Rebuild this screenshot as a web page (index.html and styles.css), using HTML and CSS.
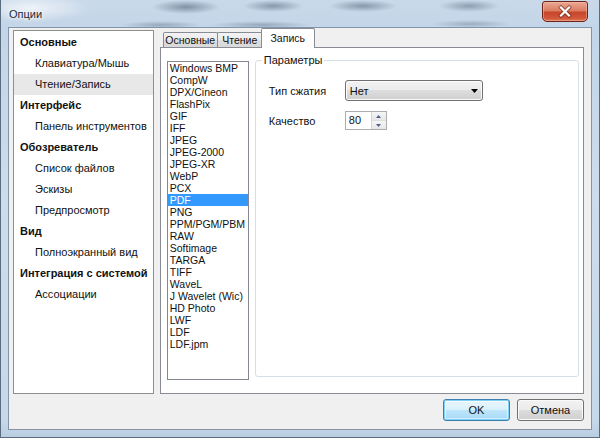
FILE: index.html
```html
<!DOCTYPE html>
<html>
<head>
<meta charset="utf-8">
<title>Опции</title>
<link rel="stylesheet" href="styles.css">
</head>
<body>
<div class="window">
  <div class="titlebar">
    <span class="title">Опции</span>
    <span class="close">
      <svg width="44" height="19" viewBox="0 0 44 19">
        <path d="M18 5.5 L26 13.5 M26 5.5 L18 13.5" stroke="#5a1a10" stroke-width="4" stroke-linecap="square" fill="none" opacity="0.55"/>
        <path d="M18 5.5 L26 13.5 M26 5.5 L18 13.5" stroke="#ffffff" stroke-width="2.2" stroke-linecap="square" fill="none"/>
      </svg>
    </span>
  </div>
  <div class="client">
    <div class="main">
      <div class="nav">
        <div class="nav-group">Основные</div>
        <div class="nav-item">Клавиатура/Мышь</div>
        <div class="nav-item selected">Чтение/Запись</div>
        <div class="nav-group">Интерфейс</div>
        <div class="nav-item">Панель инструментов</div>
        <div class="nav-group">Обозреватель</div>
        <div class="nav-item">Список файлов</div>
        <div class="nav-item">Эскизы</div>
        <div class="nav-item">Предпросмотр</div>
        <div class="nav-group">Вид</div>
        <div class="nav-item">Полноэкранный вид</div>
        <div class="nav-group">Интеграция с системой</div>
        <div class="nav-item">Ассоциации</div>
      </div>
      <div class="tabctl">
        <div class="tabstrip">
          <div class="tab tab-main">Основные</div>
          <div class="tab tab-read">Чтение</div>
          <div class="tab active">Запись</div>
        </div>
        <div class="panel">
          <div class="listbox">
            <div class="li">Windows BMP</div>
            <div class="li">CompW</div>
            <div class="li">DPX/Cineon</div>
            <div class="li">FlashPix</div>
            <div class="li">GIF</div>
            <div class="li">IFF</div>
            <div class="li">JPEG</div>
            <div class="li">JPEG-2000</div>
            <div class="li">JPEG-XR</div>
            <div class="li">WebP</div>
            <div class="li">PCX</div>
            <div class="li sel">PDF</div>
            <div class="li">PNG</div>
            <div class="li">PPM/PGM/PBM</div>
            <div class="li">RAW</div>
            <div class="li">Softimage</div>
            <div class="li">TARGA</div>
            <div class="li">TIFF</div>
            <div class="li">WaveL</div>
            <div class="li">J Wavelet (Wic)</div>
            <div class="li">HD Photo</div>
            <div class="li">LWF</div>
            <div class="li">LDF</div>
            <div class="li">LDF.jpm</div>
          </div>
          <fieldset class="group">
            <legend>Параметры</legend>
            <div class="form">
              <span class="lbl">Тип сжатия</span>
              <div class="combo">
                <span class="combo-text">Нет</span>
                <svg class="combo-arrow" width="7" height="4" viewBox="0 0 7 4"><path d="M0 0 H7 L3.5 4 Z" fill="#000"/></svg>
              </div>
              <span class="lbl">Качество</span>
              <div class="spin">
                <span class="spin-value">80</span>
                <span class="spin-btns">
                  <span class="spin-btn"><svg width="5" height="3" viewBox="0 0 5 3"><path d="M0 3 H5 L2.5 0 Z" fill="#4d6185"/></svg></span>
                  <span class="spin-btn"><svg width="5" height="3" viewBox="0 0 5 3"><path d="M0 0 H5 L2.5 3 Z" fill="#4d6185"/></svg></span>
                </span>
              </div>
            </div>
          </fieldset>
        </div>
      </div>
    </div>
    <div class="footer">
      <button class="btn default">OK</button>
      <button class="btn">Отмена</button>
    </div>
  </div>
</div>
</body>
</html>
```

FILE: styles.css
```css
* { box-sizing: border-box; }

html, body {
  margin: 0;
  padding: 0;
  width: 600px;
  height: 438px;
  overflow: hidden;
  background: #ffffff;
}

body {
  font-family: "Liberation Sans", Arial, sans-serif;
  font-size: 11px;
  color: #111;
}

.window {
  width: 600px;
  height: 438px;
  display: flex;
  flex-direction: column;
  padding: 0 7px 7px 7px;
  border: 1px solid #5a6c80;
  border-top: none;
  background:
    radial-gradient(ellipse 34px 7px at 185px 7px, rgba(70, 88, 110, 0.55), rgba(70, 88, 110, 0)),
    radial-gradient(ellipse 30px 6px at 272px 6px, rgba(70, 88, 110, 0.5), rgba(70, 88, 110, 0)),
    radial-gradient(ellipse 34px 6px at 362px 6px, rgba(70, 88, 110, 0.5), rgba(70, 88, 110, 0)),
    radial-gradient(ellipse 30px 6px at 468px 6px, rgba(70, 88, 110, 0.45), rgba(70, 88, 110, 0)),
    radial-gradient(ellipse 40px 4px at 160px 25px, rgba(80, 98, 120, 0.4), rgba(80, 98, 120, 0)),
    radial-gradient(ellipse 50px 4px at 260px 25px, rgba(80, 98, 120, 0.4), rgba(80, 98, 120, 0)),
    radial-gradient(ellipse 40px 4px at 470px 24px, rgba(80, 98, 120, 0.35), rgba(80, 98, 120, 0)),
    radial-gradient(ellipse 60px 14px at 30px 8px, rgba(255, 255, 255, 0.7), rgba(255, 255, 255, 0)),
    linear-gradient(180deg, #c9d9ea 0px, #c3d5e8 30px, #cddcec 200px, #c6d8ea 420px, #b9cde2 438px);
}

.titlebar {
  height: 28px;
  display: flex;
  align-items: flex-start;
  justify-content: space-between;
  margin: 0 -7px;
  padding: 0 11px 0 8px;
}

.title {
  font-family: "Liberation Sans", Arial, sans-serif;
  font-size: 11px;
  line-height: 13px;
  margin-top: 8px;
  color: #1c2a3a;
  text-shadow: 0 0 6px rgba(255, 255, 255, 0.9), 0 0 3px rgba(255, 255, 255, 0.9);
}

.close {
  width: 46px;
  height: 21px;
  margin-top: 1px;
  display: flex;
  align-items: center;
  justify-content: center;
  border: 1px solid #6b2418;
  border-radius: 3px 3px 5px 5px;
  background: linear-gradient(180deg, #e9a895 0%, #dc7d63 45%, #c7462a 55%, #d0563a 85%, #e07a58 100%);
  box-shadow: inset 0 0 0 1px rgba(255, 200, 180, 0.45);
}

.close svg { display: block; }

.client {
  flex: 1;
  display: flex;
  flex-direction: column;
  background: #f0f0f0;
  border: 1px solid #8493a6;
  padding: 2px 7px 8px 4px;
}

.main {
  height: 364px;
  display: flex;
  gap: 6px;
}

.nav {
  width: 142px;
  border: 1px solid #8e8f8f;
  background: #ffffff;
  padding-top: 1px;
}

.nav-group,
.nav-item {
  height: 21px;
  line-height: 21px;
  white-space: nowrap;
}

.nav-group {
  font-weight: bold;
  padding-left: 6px;
}

.nav-item {
  padding-left: 21px;
}

.nav-item.selected {
  background: #e8e8e8;
}

.tabctl {
  width: 428px;
  display: flex;
  flex-direction: column;
}

.tabstrip {
  height: 17px;
  display: flex;
  align-items: flex-end;
  padding-left: 3px;
  position: relative;
  z-index: 1;
}

.tab {
  height: 15px;
  line-height: 14px;
  padding: 0;
  text-align: center;
  font-size: 10.5px;
  border: 1px solid #898c95;
  border-bottom: none;
  border-radius: 2px 2px 0 0;
  background: linear-gradient(180deg, #f3f3f3 0%, #ebebeb 50%, #dedede 50%, #d9d9d9 100%);
  white-space: nowrap;
}

.tab-main { width: 55px; }

.tab-read { width: 46px; }

.tab + .tab {
  margin-left: -1px;
}

.tab.active {
  width: 54px;
  height: 20px;
  line-height: 18px;
  margin: 0 -2px -1px -2px;
  background: #ffffff;
  position: relative;
  z-index: 2;
}

.panel {
  flex: 1;
  display: flex;
  gap: 6px;
  border: 1px solid #898c95;
  background: #ffffff;
  padding: 13px 4px 13px 6px;
}

.listbox {
  width: 82px;
  border: 1px solid #828790;
  padding: 0;
  background: #fff;
  font-size: 10.5px;
}

.li {
  height: 12px;
  line-height: 12px;
  padding-left: 2px;
  white-space: nowrap;
}

.li.sel {
  background: #3399ff;
  color: #ffffff;
}

.group {
  flex: 1;
  min-width: 0;
  margin: -7px 0 3px 0;
  padding: 13px 10px 0 13px;
  border: 1px solid #d5dfe5;
  border-radius: 3px;
  box-shadow: inset 1px 1px 0 #ffffff;
}

.group legend {
  padding: 0 2px;
  margin-left: -7px;
  line-height: 13px;
}

.form {
  display: grid;
  grid-template-columns: 76px auto;
  grid-template-rows: 21px 19px;
  row-gap: 10px;
  align-items: center;
  justify-content: start;
}

.lbl {
  white-space: nowrap;
}

.combo {
  width: 138px;
  height: 21px;
  display: flex;
  align-items: center;
  justify-content: space-between;
  padding: 0 3px 0 4px;
  border: 1px solid #707070;
  border-radius: 3px;
  background: linear-gradient(180deg, #f2f2f2 0%, #ebebeb 50%, #dddddd 50%, #cfcfcf 100%);
  box-shadow: inset 0 0 0 1px #fbfbfb;
}

.combo-arrow {
  display: block;
  margin-right: 1px;
}

.spin {
  width: 42px;
  height: 19px;
  display: flex;
  border: 1px solid #abadb3;
  background: #ffffff;
}

.spin-value {
  flex: 1;
  line-height: 17px;
  padding-left: 3px;
}

.spin-btns {
  width: 15px;
  display: flex;
  flex-direction: column;
  border-left: 1px solid #d3d3d3;
}

.spin-btn {
  flex: 1;
  display: flex;
  align-items: center;
  justify-content: center;
  background: linear-gradient(180deg, #f6f6f6, #e6e6e6);
  border-bottom: 1px solid #e0e0e0;
}

.spin-btn:last-child { border-bottom: none; }

.spin-btn svg { display: block; }

.footer {
  margin-top: 5px;
  height: 22px;
  display: flex;
  justify-content: flex-end;
  gap: 7px;
}

.btn {
  width: 67px;
  height: 22px;
  padding: 0;
  font-family: "Liberation Sans", Arial, sans-serif;
  font-size: 11px;
  color: #111;
  border: 1px solid #707070;
  border-radius: 3px;
  background: linear-gradient(180deg, #f2f2f2 0%, #ebebeb 50%, #dddddd 50%, #cfcfcf 100%);
  box-shadow: inset 0 0 0 1px #fbfbfb;
}

.btn.default {
  border-color: #3c7fb1;
  background: linear-gradient(180deg, #eaf6fd 0%, #d9f0fc 50%, #bee6fd 50%, #a7d9f5 100%);
  box-shadow: inset 0 0 0 1px #7fd0f5, inset 0 0 0 2px rgba(255, 255, 255, 0.5);
}
```
